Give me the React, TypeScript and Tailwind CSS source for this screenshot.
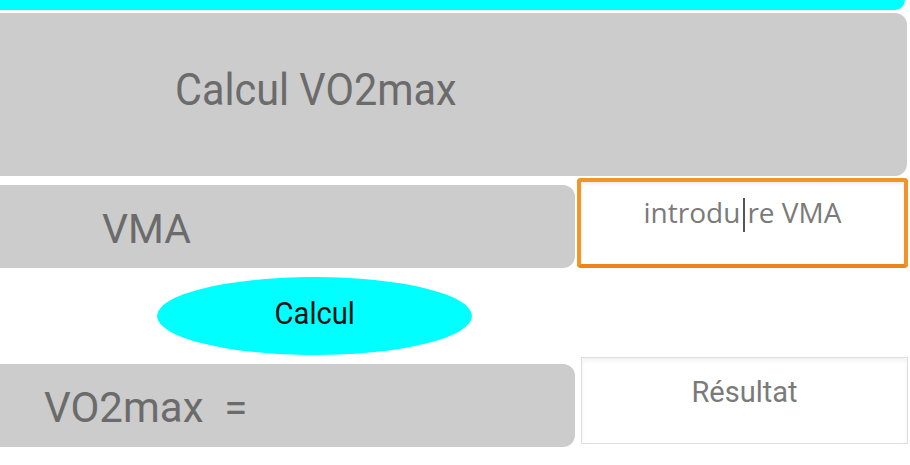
export default function App() {
  return (
    <div className="w-[910px] h-[465px] bg-white overflow-hidden font-[Roboto,sans-serif]">
      <div className="h-[10px] w-[905px] bg-[#00ffff] rounded-br-[10px]" />
      <div className="mt-[3px] h-[163px] w-[907px] bg-[#cccccc] rounded-r-[12px] flex items-center pl-[175px] pb-[10px]">
        <span className="inline-block origin-left scale-x-[0.92] text-[45px] leading-none text-[#6b6b6b]">
          Calcul VO2max
        </span>
      </div>
      <div className="mt-[2px] flex items-start">
        <div className="mt-[7px] h-[83px] w-[575px] bg-[#cccccc] rounded-r-[12px] flex items-center pl-[102px] pt-[6px]">
          <span className="text-[41px] leading-none text-[#6b6b6b]">VMA</span>
        </div>
        <div className="ml-[2px] h-[90px] w-[331px] border-4 border-[#f39526] border-b-[#ec8519] rounded-[4px] bg-white shadow-[inset_0_2px_3px_rgba(0,0,0,0.08)] text-center pt-[16px] font-['Open_Sans',sans-serif] text-[28px] leading-none text-[#7a7a7a]">
          introdu
          <span className="relative text-transparent">
            i
            <span className="absolute left-1/2 -translate-x-1/2 top-[5px] w-[2px] h-[34px] bg-[#555555]" />
          </span>
          re VMA
        </div>
      </div>
      <div className="mt-[9px] ml-[157px] w-[315px] h-[78px] rounded-[50%] bg-[#00ffff] flex items-center justify-center pb-[6px]">
        <span className="inline-block scale-x-[0.94] text-[31px] leading-none text-[#111111]">Calcul</span>
      </div>
      <div className="mt-[2px] flex items-start">
        <div className="mt-[7px] h-[83px] w-[575px] bg-[#cccccc] rounded-r-[12px] flex items-center pl-[44px] pt-[5px]">
          <span className="text-[42px] leading-none text-[#6b6b6b] whitespace-pre">VO2max  =</span>
        </div>
        <div className="ml-[6px] h-[87px] w-[327px] border border-[#dedede] bg-white shadow-[inset_0_3px_4px_rgba(0,0,0,0.05)] text-center pt-[20px]">
          <span className="text-[29px] leading-none text-[#7a7a7a]">Résultat</span>
        </div>
      </div>
    </div>
  );
}
